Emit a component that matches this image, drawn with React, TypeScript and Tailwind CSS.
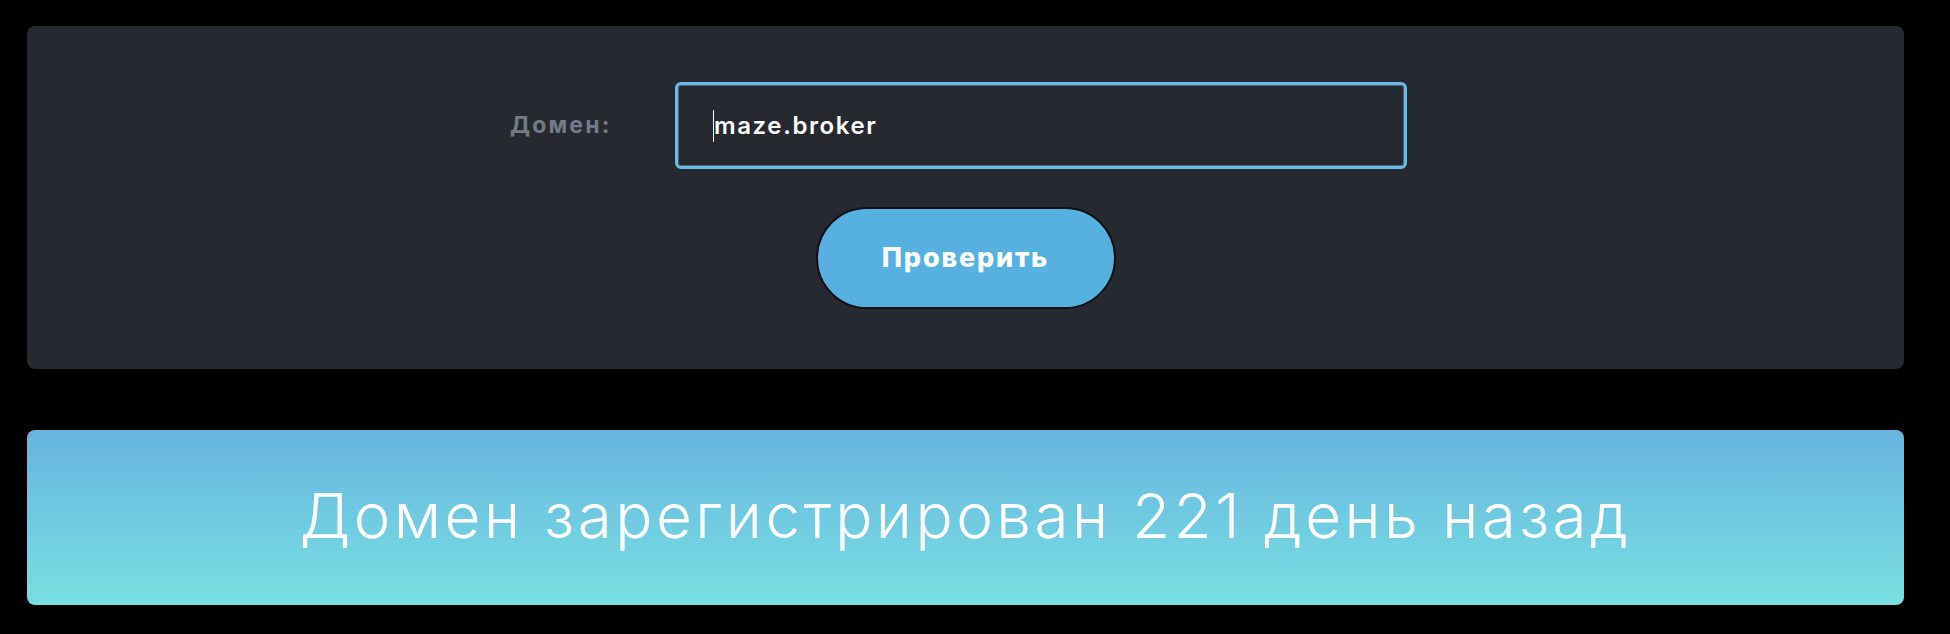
import { useState } from "react";

const App: React.FC = () => {
  const [domain] = useState("maze.broker");
  const [days] = useState(221);

  return (
    <div className="min-h-screen w-full bg-black pl-[27px] pr-[46px] pt-[26px] font-['Inter',sans-serif]">
      {/** Form card */}
      <div className="h-[343px] rounded-lg bg-[#262a30] flex flex-col items-center pt-[56px]">
        <div className="flex flex-row items-center gap-[62px] pr-[14px]">
          <label htmlFor="domain" className="w-[103px] text-[23px] font-bold text-[#737b89] tracking-[2.2px]">
            Домен:
          </label>
          <div
            id="domain"
            className="w-[732px] h-[87px] rounded-md border-[3px] border-[#66bde8] shadow-[inset_0_0_0_1px_#56606c] flex items-center pl-[35px]"
          >
            <span className="w-px h-[32px] bg-white" />
            <span className="text-[24px] font-semibold text-white tracking-[1.6px]">{domain}</span>
          </div>
        </div>
        <button
          type="button"
          className="mt-[38px] w-[300px] h-[102px] rounded-full border-2 border-[#0e1013] bg-[#56b1e0] text-white text-[27px] font-extrabold tracking-[1.8px]"
        >
          Проверить
        </button>
      </div>

      {/** Result */}
      <div className="mt-[61px] h-[175px] rounded-lg bg-gradient-to-b from-[#67b4df] to-[#79e0e2] flex items-center justify-center">
        <p className="text-[62px] font-light text-white tracking-[3.4px] -mt-[4px]">
          Домен зарегистрирован {days} день назад
        </p>
      </div>
    </div>
  );
};

export default App;
